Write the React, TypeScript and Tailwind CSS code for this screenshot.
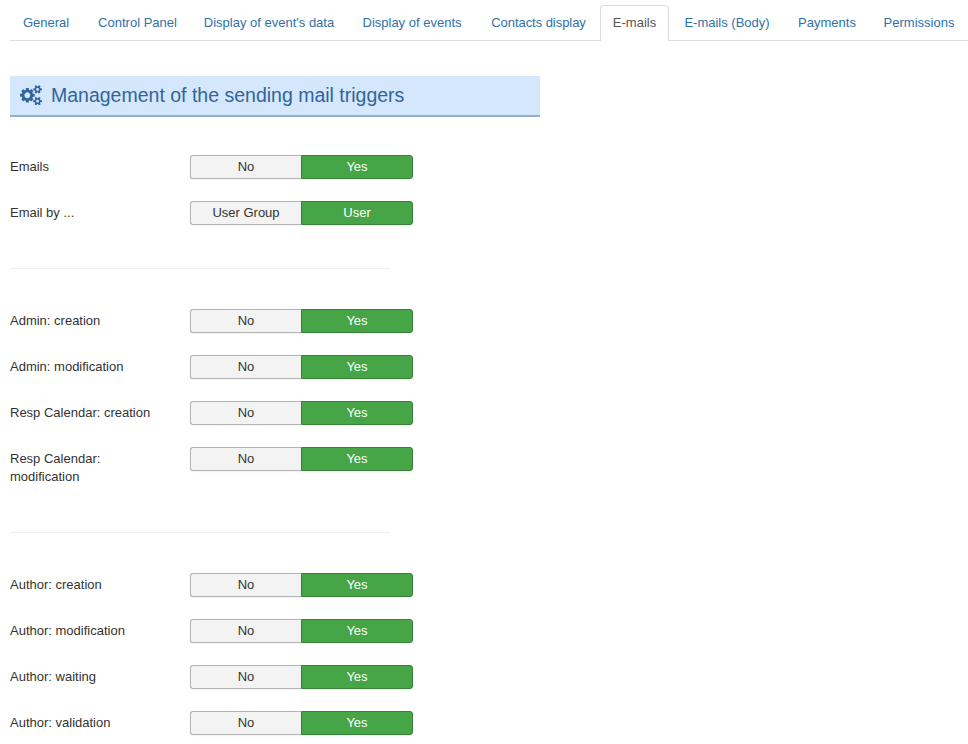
import React from "react";

const tabs = [
  { label: "General", width: "w-[72px]" },
  { label: "Control Panel", width: "w-[107px]" },
  { label: "Display of event's data", width: "w-[152px]" },
  { label: "Display of events", width: "w-[130px]" },
  { label: "Contacts display", width: "w-[119px] tracking-[-0.05px]" },
  { label: "E-mails", width: "w-[69px]" },
  { label: "E-mails (Body)", width: "w-[112px]" },
  { label: "Payments", width: "w-[84px]" },
  { label: "Permissions", width: "w-[96px]" },
];

function Tabs() {
  return (
    <nav className="ml-2.5 mt-[5px] flex h-9 gap-0.5 border-b border-[#ddd]">
      {tabs.map((t) => (
        <a
          key={t.label}
          className={`${t.width} h-9 shrink-0 whitespace-nowrap text-center leading-[18px] ${
            t.label === "E-mails"
              ? "rounded-t border border-b-0 border-[#ddd] bg-white pt-2 text-[#555]"
              : "pt-[9px] text-[#3071a9]"
          }`}
        >
          {t.label}
        </a>
      ))}
    </nav>
  );
}

function CogsIcon() {
  return (
    <svg viewBox="0 0 1920 1792" className="mr-[9px] h-[20.5px] w-[22px] shrink-0" fill="currentColor">
      <path d="M896 896q0-106-75-181t-181-75-181 75-75 181 75 181 181 75 181-75 75-181zm768 512q0-52-38-90t-90-38-90 38-38 90q0 53 37.5 90.5t90.5 37.5 90.5-37.5 37.5-90.5zm0-1024q0-52-38-90t-90-38-90 38-38 90q0 53 37.5 90.5t90.5 37.5 90.5-37.5 37.5-90.5zm-384 421v185q0 10-7 19.5t-16 10.5l-155 24q-11 35-32 76 34 48 90 115 7 11 7 20 0 12-7 19-23 30-82.5 89.5t-78.5 59.5q-11 0-21-7l-115-90q-37 19-77 31-11 108-23 155-7 24-30 24h-186q-11 0-20-7.5t-10-17.5l-23-153q-34-10-75-31l-118 89q-7 7-20 7-11 0-21-8-144-133-144-160 0-9 7-19 10-14 41-53t47-61q-23-44-35-82l-152-24q-10-1-17-9.5t-7-19.5v-185q0-10 7-19.5t16-10.5l155-24q11-35 32-76-34-48-90-115-7-11-7-20 0-12 7-20 22-30 82-89t79-59q11 0 21 7l115 90q34-18 77-32 11-108 23-154 7-24 30-24h186q11 0 20 7.5t10 17.5l23 153q34 10 75 31l118-89q8-7 20-7 11 0 21 8 144 133 144 160 0 8-7 19-12 16-42 54t-45 60q23 48 34 82l152 23q10 2 17 10.5t7 19.5zm640 533v140q0 16-149 31-12 27-30 52 51 113 51 138 0 4-4 7-122 71-124 71-8 0-46-47t-52-68q-20 2-30 2t-30-2q-14 21-52 68t-46 47q-2 0-124-71-4-3-4-7 0-25 51-138-18-25-30-52-149-15-149-31v-140q0-16 149-31 13-29 30-52-51-113-51-138 0-4 4-7 4-2 35-20t59-34 30-16q8 0 46 46.5t52 67.5q20-2 30-2t30 2q51-71 92-112l6-2q4 0 124 70 4 3 4 7 0 25-51 138 17 23 30 52 149 15 149 31zm0-1024v140q0 16-149 31-12 27-30 52 51 113 51 138 0 4-4 7-122 71-124 71-8 0-46-47t-52-68q-20 2-30 2t-30-2q-14 21-52 68t-46 47q-2 0-124-71-4-3-4-7 0-25 51-138-18-25-30-52-149-15-149-31v-140q0-16 149-31 13-29 30-52-51-113-51-138 0-4 4-7 4-2 35-20t59-34 30-16q8 0 46 46.5t52 67.5q20-2 30-2t30 2q51-71 92-112l6-2q4 0 124 70 4 3 4 7 0 25-51 138 17 23 30 52 149 15 149 31z" />
    </svg>
  );
}

function Row({ label, no = "No", yes = "Yes" }: { label: string; no?: string; yes?: string }) {
  return (
    <div className="mb-[18px] flex min-h-7 items-start">
      <div className="w-[160px] pb-[5px] pr-4 pt-[5px] leading-[18px]">{label}</div>
      <div className="ml-5 mt-[2px] flex h-6 w-[223px] text-center leading-[22px]">
        <div className="w-[111px] rounded-l-[3px] border border-r-0 border-[#b3b3b3] bg-[#f3f3f3] shadow-[0_1px_2px_rgba(0,0,0,0.05)]">
          {no}
        </div>
        <div className="w-28 rounded-r-[3px] border border-[#378137] bg-[#46a546] text-white shadow-[0_1px_2px_rgba(0,0,0,0.05)]">
          {yes}
        </div>
      </div>
    </div>
  );
}

export default function App() {
  return (
    <div className="h-[744px] w-[968px] overflow-hidden bg-white font-['Liberation_Sans',Arial,sans-serif] text-[13px] text-[#333]">
      <Tabs />
      <h3 className="ml-2.5 mt-[35px] flex h-[41px] w-[530px] items-center border-b-2 border-[#92afcf] bg-[#d5e7fc] pb-px pl-[10px] text-[19.5px] leading-9 text-[#31659b]">
        <CogsIcon />
        Management of the sending mail triggers
      </h3>
      <main className="ml-2.5 mt-9">
        <Row label="Emails" />
        <Row label="Email by ..." no="User Group" yes="User" />
        <hr className="mb-[38px] mt-[41px] w-[380px] border-[#eee]" />
        <Row label="Admin: creation" />
        <Row label="Admin: modification" />
        <Row label="Resp Calendar: creation" />
        <Row label="Resp Calendar: modification" />
        <hr className="mb-[38px] mt-[41px] w-[380px] border-[#eee]" />
        <Row label="Author: creation" />
        <Row label="Author: modification" />
        <Row label="Author: waiting" />
        <Row label="Author: validation" />
      </main>
    </div>
  );
}
